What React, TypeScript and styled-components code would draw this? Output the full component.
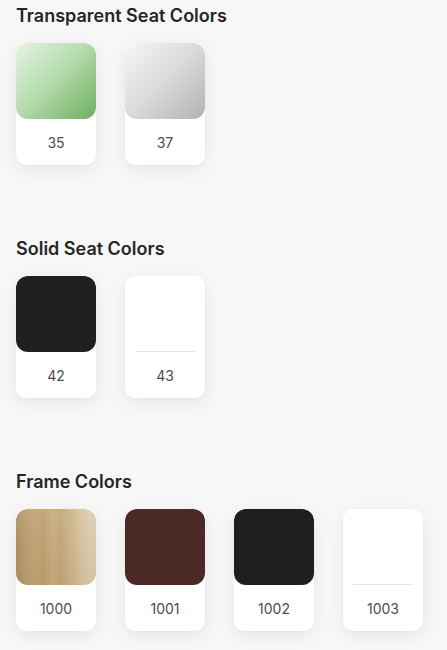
import React from "react";
import styled, { createGlobalStyle } from "styled-components";

const Global = createGlobalStyle`
  html, body {
    margin: 0;
    padding: 0;
    background: #f7f7f7;
  }
  body {
    font-family: Inter, "Open Sans", Arial, sans-serif;
    -webkit-font-smoothing: antialiased;
  }
`;

const Page = styled.div`
  display: flex;
  flex-direction: column;
  gap: 73px;
  padding: 5px 16px 16px;
  width: 447px;
  min-height: 650px;
  box-sizing: border-box;
  background: #f7f7f7;
`;

const Section = styled.section`
  display: flex;
  flex-direction: column;
  gap: 16px;
`;

const Heading = styled.h2`
  margin: 0;
  font-size: 18px;
  line-height: 22px;
  font-weight: 600;
  color: #262626;
  letter-spacing: 0;
`;

const Grid = styled.div`
  display: flex;
  gap: 29px;
`;

const Card = styled.div`
  width: 80px;
  height: 122px;
  background: #ffffff;
  border-radius: 10px;
  box-shadow: 0 5px 18px rgba(0, 0, 0, 0.07), 0 1px 3px rgba(0, 0, 0, 0.025);
  display: flex;
  flex-direction: column;
  overflow: hidden;
`;

const Swatch = styled.div<{ $bg: string; $white?: boolean }>`
  position: relative;
  height: 76px;
  border-radius: 12px;
  background: ${(p) => p.$bg};
  flex: none;
  ${(p) =>
    p.$white
      ? `
    &::after {
      content: "";
      position: absolute;
      left: 10px;
      right: 10px;
      bottom: 0;
      height: 1px;
      background: #e6e6e6;
    }
  `
      : ""}
`;

const Label = styled.div`
  flex: 1;
  display: flex;
  align-items: center;
  justify-content: center;
  font-size: 14px;
  color: #4d4d4d;
  font-weight: 400;
`;

type Item = { code: string; bg: string; white?: boolean };

const gold = `linear-gradient(180deg, rgba(255,255,255,0.08) 0%, rgba(0,0,0,0) 40%, rgba(60,40,10,0.05) 100%),
  linear-gradient(90deg, #ae9065 0%, #b89a6e 10%, #c2a577 22%, #bea072 34%, #c8ac80 46%, #c4a779 56%, #ccb48b 68%, #d4c19c 80%, #dacdb0 92%, #d8caab 100%)`;

const sections: { title: string; items: Item[] }[] = [
  {
    title: "Transparent Seat Colors",
    items: [
      { code: "35", bg: "linear-gradient(135deg, #e6f3e2 0%, #b8dcb0 45%, #6eae62 100%)" },
      { code: "37", bg: "linear-gradient(135deg, #f6f6f6 0%, #dadadb 50%, #b2b2b5 100%)" },
    ],
  },
  {
    title: "Solid Seat Colors",
    items: [
      { code: "42", bg: "#201e1f" },
      { code: "43", bg: "#ffffff", white: true },
    ],
  },
  {
    title: "Frame Colors",
    items: [
      { code: "1000", bg: gold },
      { code: "1001", bg: "#4a2926" },
      { code: "1002", bg: "#201e1f" },
      { code: "1003", bg: "#ffffff", white: true },
    ],
  },
];

export default function App() {
  return (
    <>
      <Global />
      <Page>
        {sections.map((s) => (
          <Section key={s.title}>
            <Heading>{s.title}</Heading>
            <Grid>
              {s.items.map((it) => (
                <Card key={it.code}>
                  <Swatch $bg={it.bg} $white={it.white} />
                  <Label>{it.code}</Label>
                </Card>
              ))}
            </Grid>
          </Section>
        ))}
      </Page>
    </>
  );
}
